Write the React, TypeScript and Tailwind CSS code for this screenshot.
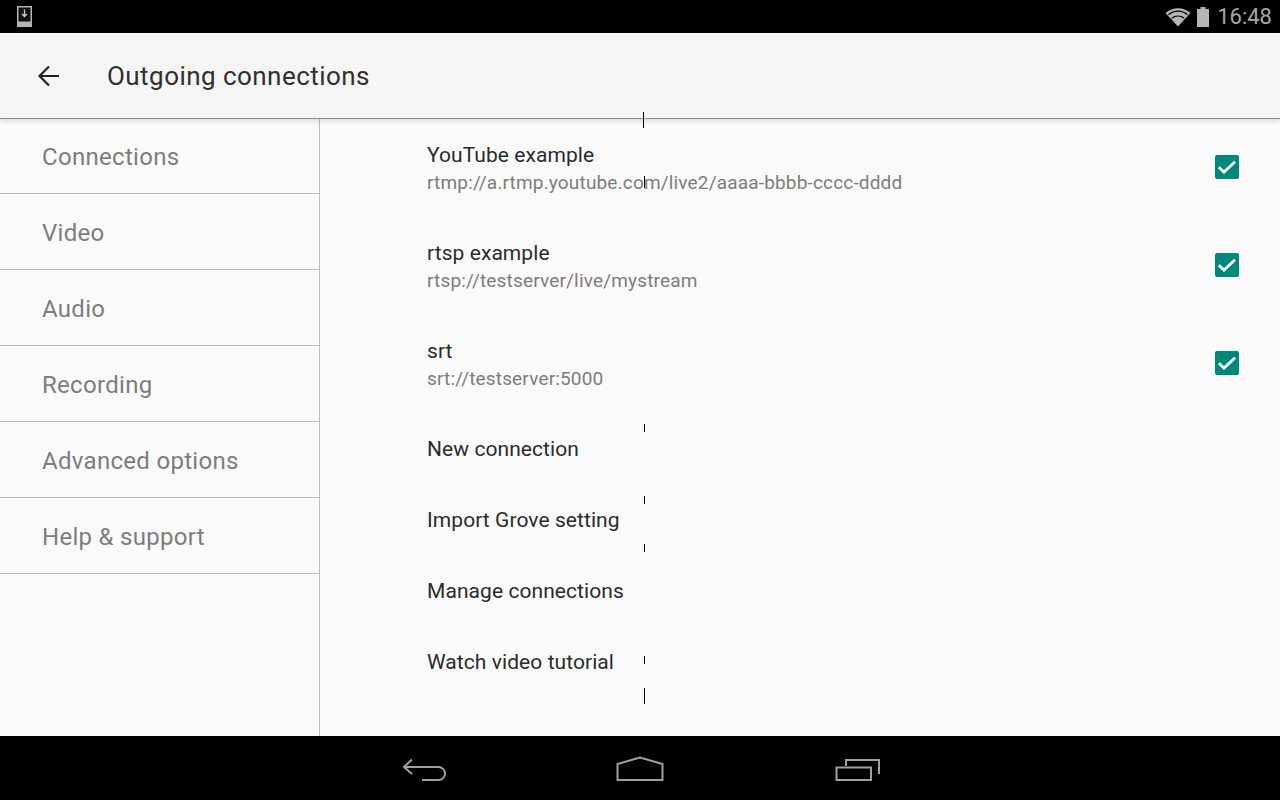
const menu = ["Connections", "Video", "Audio", "Recording", "Advanced options", "Help & support"];

const connections = [
  { name: "YouTube example", url: "rtmp://a.rtmp.youtube.com/live2/aaaa-bbbb-cccc-dddd" },
  { name: "rtsp example", url: "rtsp://testserver/live/mystream" },
  { name: "srt", url: "srt://testserver:5000" },
];

const actions = ["New connection", "Import Grove setting", "Manage connections", "Watch video tutorial"];

function StatusBar() {
  return (
    <div className="flex h-[33px] shrink-0 items-center justify-between bg-black pl-[17px] pr-2">
      <svg width="15" height="21" viewBox="0 0 15 21">
        <rect x="0" y="0" width="15" height="21" fill="#b5b5b5" />
        <rect x="1.5" y="1.5" width="12" height="14" fill="#111" />
        <path d="M7.5 3.5v7M5 8l2.5 2.5L10 8" stroke="#c8c8c8" strokeWidth="1.4" fill="none" />
      </svg>
      <div className="flex items-center text-[#a8a8a8]">
        <svg width="26" height="20" viewBox="0 0 26 20" className="-ml-px">
          <path d="M0.5 6 C7 -0.5 19 -0.5 25.5 6 L13 19.5 Z" fill="#b4b4b4" />
          <path d="M3.5 7.8 C9 3 17 3 22.5 7.8" stroke="#000" strokeWidth="1.2" fill="none" />
          <path d="M6.8 11.3 C10.5 8.3 15.5 8.3 19.2 11.3" stroke="#000" strokeWidth="1.2" fill="none" />
        </svg>
        <svg width="14" height="20" viewBox="0 0 14 20" className="ml-[5px]">
          <path d="M4.5 0h5v2h3.5v18H1V2h3.5z" fill="#b4b4b4" />
        </svg>
        <span className="ml-[7px] text-[22px] leading-none">16:48</span>
      </div>
    </div>
  );
}

function Checkbox() {
  return (
    <div className="flex size-6 items-center justify-center rounded-[2px] bg-[#00897b]">
      <svg width="24" height="24" viewBox="0 0 24 24">
        <path d="M3.8 12.3 9 17 20 6.8" stroke="#fff" strokeWidth="2.8" fill="none" />
      </svg>
    </div>
  );
}

function NavBar() {
  return (
    <div className="flex h-16 shrink-0 items-center gap-[170px] bg-black pl-[402px]">
      <svg width="44" height="28" viewBox="0 0 44 28" fill="none" stroke="#a0a0a0" strokeWidth="2">
        <path d="M10 5.5 2 13 10 20M2 13H36.5A6.5 6.5 0 0 1 36.5 26H20" />
      </svg>
      <svg width="49" height="28" viewBox="0 0 49 28" fill="none" stroke="#a0a0a0" strokeWidth="2">
        <path d="M1.5 10 24 3.5 46.5 10V26H1.5Z" />
      </svg>
      <svg width="46" height="28" viewBox="0 0 46 28" fill="none" stroke="#a0a0a0" strokeWidth="2">
        <path d="M11 12V6H44V20" />
        <path d="M1.5 13.5H36V26H1.5Z" />
      </svg>
    </div>
  );
}

export default function App() {
  return (
    <div className="relative flex h-[800px] w-[1280px] flex-col overflow-hidden bg-[#fafafa] font-['Roboto',sans-serif]">
      <StatusBar />

      <header className="z-10 flex h-[86px] shrink-0 items-center border-b border-[#8f8f8f] bg-[#f5f5f5] pl-[38px] shadow-[0_2px_5px_rgba(0,0,0,0.14)]">
        <svg width="21" height="22" viewBox="0 0 21 22" fill="none" stroke="#212121" strokeWidth="2.2">
          <path d="M21 11H2M11 1.5 1.5 11 11 20.5" />
        </svg>
        <h1 className="ml-[48px] text-[26px] leading-none tracking-[0.45px] text-[#2f2f2f]">Outgoing connections</h1>
      </header>

      <div className="flex min-h-0 flex-1">
        <aside className="w-[320px] shrink-0 border-r border-[#bdbdbd]">
          {menu.map((item, i) => (
            <div
              key={item}
              className={`flex items-center border-b border-[#bdbdbd] pl-[42px] pt-[2px] text-[24px] tracking-[0.3px] text-[#7d7d7d] ${i === 0 ? "h-[75px]" : "h-[76px]"}`}
            >
              {item}
            </div>
          ))}
        </aside>

        <main className="min-w-0 flex-1 pl-[107px] pr-[41px] pt-[19px]">
          <div className="flex flex-col gap-[18px]">
            {connections.map((c) => (
              <div key={c.name} className="flex h-[80px] items-start justify-between">
                <div>
                  <div className="text-[21px] leading-[34px] tracking-[0.07px] text-[#2b2b2b]">{c.name}</div>
                  <div className="mt-[1px] text-[19px] leading-5 tracking-[0.17px] text-[#7d7d7d]">{c.url}</div>
                </div>
                <div className="mt-[17px]">
                  <Checkbox />
                </div>
              </div>
            ))}
          </div>
          {actions.map((a) => (
            <div key={a} className="flex h-[71px] items-center text-[21px] tracking-[0.07px] text-[#2b2b2b]">
              {a}
            </div>
          ))}
        </main>
      </div>

      <NavBar />

      {/* stray tick marks that sit over the content */}
      <div className="absolute left-[643px] top-[112px] z-20 h-4 w-px bg-black" />
      <div className="absolute left-[644px] top-[176px] z-20 h-3 w-px bg-black" />
      <div className="absolute left-[644px] top-[424px] z-20 h-2 w-px bg-black" />
      <div className="absolute left-[644px] top-[496px] z-20 h-2 w-px bg-black" />
      <div className="absolute left-[644px] top-[544px] z-20 h-2 w-px bg-black" />
      <div className="absolute left-[644px] top-[656px] z-20 h-2 w-px bg-black" />
      <div className="absolute left-[644px] top-[688px] z-20 h-4 w-px bg-black" />
    </div>
  );
}
